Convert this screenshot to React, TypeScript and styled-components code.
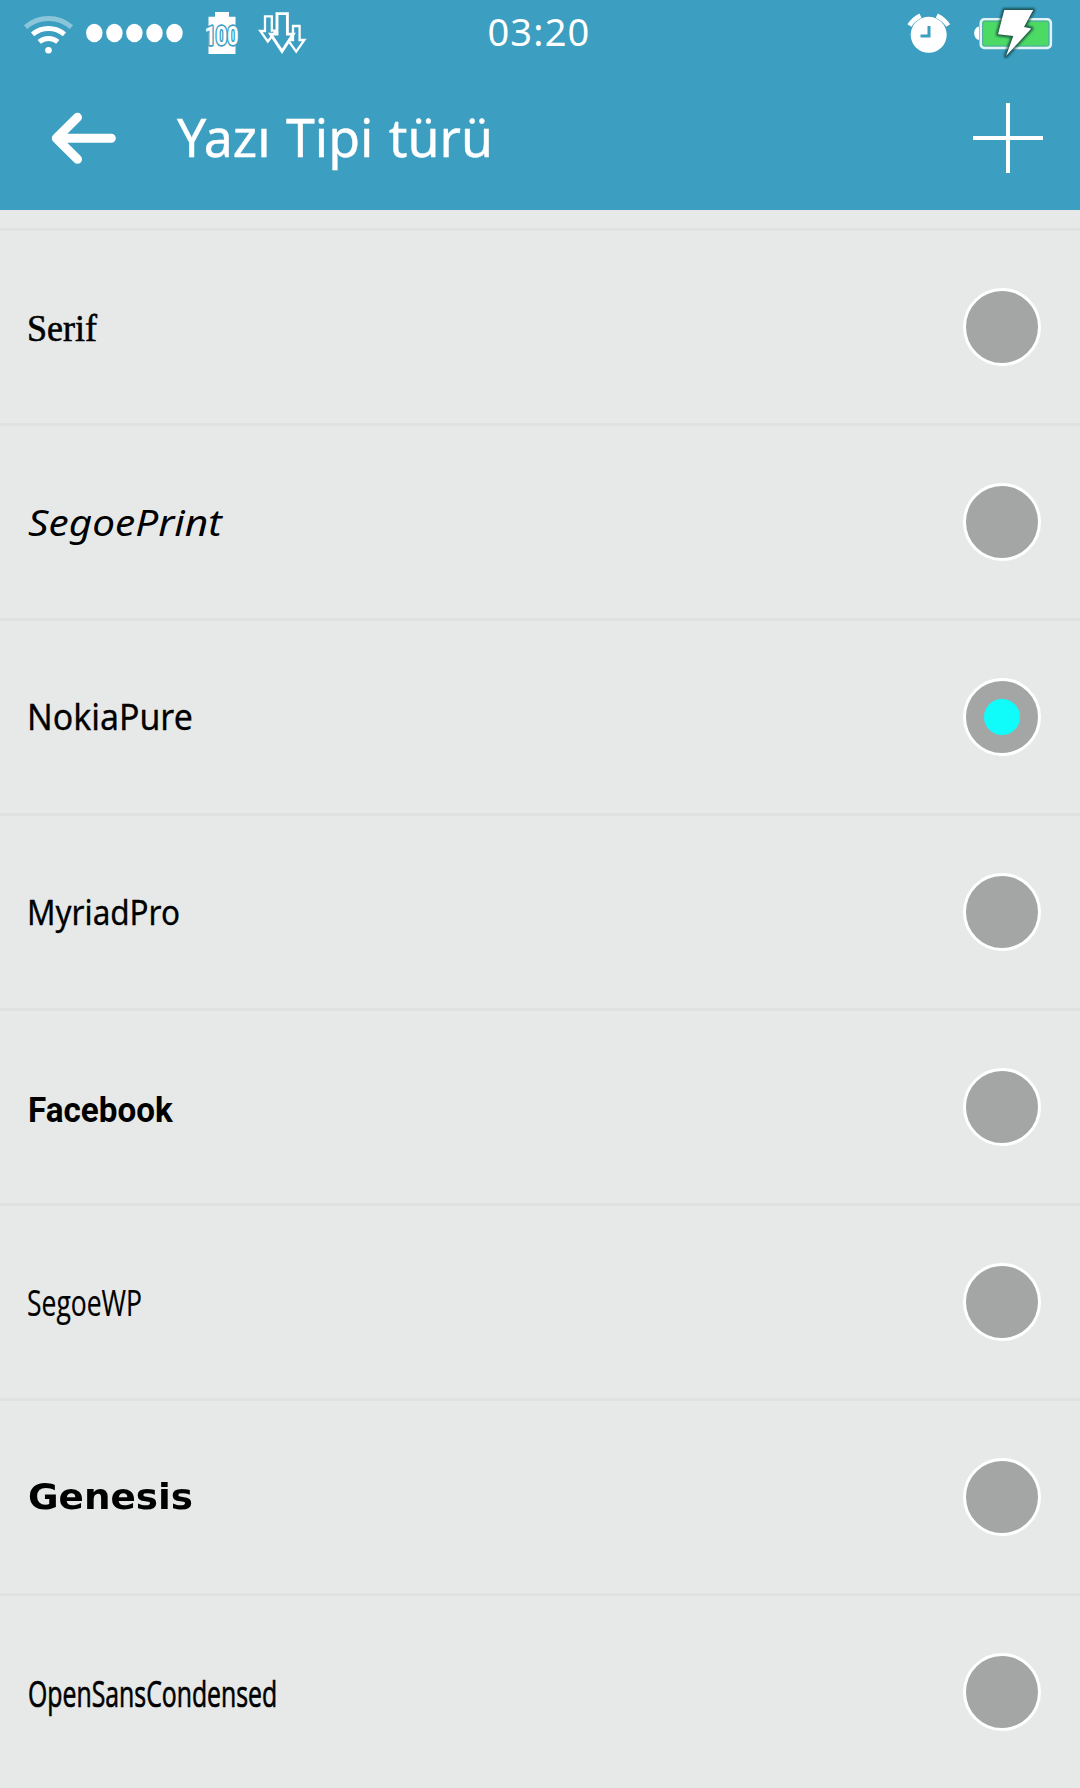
import React, { useState } from "react";
import styled, { createGlobalStyle } from "styled-components";

const BLUE = "#3c9ec0";

const GlobalStyle = createGlobalStyle`
  * { box-sizing: border-box; }
  html, body { margin: 0; background: #e6e9e8; }
`;

const Screen = styled.main`
  width: 1080px;
  height: 1788px;
  overflow: hidden;
  display: flex;
  flex-direction: column;
  background: #e6e9e8;
  font-family: "Noto Sans", "Open Sans", sans-serif;
`;

const StatusBar = styled.div`
  display: grid;
  grid-template-columns: 1fr auto 1fr;
  align-items: center;
  height: 66px;
  flex: none;
  background: ${BLUE};
`;

const StatusGroup = styled.div<{ $end?: boolean }>`
  display: flex;
  align-items: center;
  height: 66px;
  justify-content: ${(p) => (p.$end ? "flex-end" : "flex-start")};

  svg { display: block; }
`;

const Clock = styled.time`
  color: #fff;
  font-size: 38px;
  line-height: 66px;
  letter-spacing: 1.2px;
  transform: translate(-1px, -2px);
`;

const TitleBar = styled.header`
  display: flex;
  align-items: center;
  height: 144px;
  flex: none;
  padding: 0 36px 0 50px;
  background: ${BLUE};
`;

const IconButton = styled.button`
  display: flex;
  padding: 0;
  border: 0;
  background: none;
  cursor: pointer;
`;

const Title = styled.h1`
  flex: 1;
  margin: 0 0 0 59px;
  color: #fff;
  font-size: 53px;
  font-weight: 400;
  line-height: 73px;
  word-spacing: 2px;
  -webkit-text-stroke: 0.4px #fff;
  transform: translateY(-2px) scaleX(0.978);
  transform-origin: 0 50%;
`;

const FontList = styled.ul`
  margin: 0;
  padding: 18px 0 0;
  list-style: none;
`;

const FontRow = styled.li`
  display: flex;
  align-items: center;
  justify-content: space-between;
  height: 195px;
  padding: 0 39px 0 27px;
  border-top: 3px solid #dfe2e1;
  cursor: pointer;
`;

interface LabelProps {
  $family: string;
  $size: number;
  $weight?: number;
  $italic?: boolean;
  $stretch: number;
  $drop?: number;
  $inset?: number;
  $thicken?: number;
}

const FontLabel = styled.span<LabelProps>`
  margin-left: ${(p) => p.$inset ?? 0}px;
  color: #000;
  font-family: ${(p) => p.$family}, sans-serif;
  font-size: ${(p) => p.$size}px;
  font-weight: ${(p) => p.$weight ?? 400};
  font-style: ${(p) => (p.$italic ? "italic" : "normal")};
  white-space: nowrap;
  -webkit-text-stroke: ${(p) => p.$thicken ?? 0}px #000;
  transform: translateY(${(p) => p.$drop ?? 0}px) scaleX(${(p) => p.$stretch});
  transform-origin: 0 50%;
`;

const Radio = styled.span`
  display: grid;
  place-items: center;
  width: 78px;
  height: 78px;
  border: 3px solid #fff;
  border-radius: 50%;
  background: #a4a6a5;
`;

const RadioDot = styled.span`
  width: 36px;
  height: 36px;
  border-radius: 50%;
  background: #0ffcfa;
`;

interface FontOption extends LabelProps {
  name: string;
}

const fonts: FontOption[] = [
  { name: "Serif", $family: '"Liberation Serif"', $size: 38.5, $stretch: 0.935, $drop: 1, $thicken: 0.6 },
  { name: "SegoePrint", $family: '"Noto Sans"', $size: 37, $italic: true, $stretch: 1.095, $drop: -1, $inset: 1 },
  { name: "NokiaPure", $family: '"Noto Sans"', $size: 36, $stretch: 0.94, $drop: -1, $thicken: 0.3 },
  { name: "MyriadPro", $family: '"Noto Sans"', $size: 35, $stretch: 0.898, $drop: -1, $thicken: 0.3 },
  { name: "Facebook", $family: "Roboto", $size: 34.5, $weight: 700, $stretch: 0.963, $drop: 3, $inset: 0.5 },
  { name: "SegoeWP", $family: '"Open Sans"', $size: 36, $stretch: 0.736, $drop: -0.5, $thicken: 0.2 },
  { name: "Genesis", $family: '"DejaVu Sans"', $size: 35, $weight: 700, $stretch: 1.066, $inset: 0.5 },
  { name: "OpenSansCondensed", $family: '"Open Sans"', $size: 37, $weight: 500, $stretch: 0.671, $drop: -0.5, $thicken: 0.7, $inset: 0.5 },
];

const StatusIcons = () => (
  <svg width="320" height="66" viewBox="0 0 320 66" fill="none">
    <g stroke="#fff" strokeWidth="5">
      <path d="M25.6 27.2A34.5 34.5 0 0 1 71.4 27.2" opacity=".4" />
      <path d="M32.6 34.4A24.5 24.5 0 0 1 64.4 34.4" />
      <path d="M39.2 41.9A14.5 14.5 0 0 1 57.8 41.9" />
    </g>
    <circle cx="48.5" cy="50.3" r="3.3" fill="#fff" />
    {[94.3, 114.4, 134.4, 154.5, 174.5].map((x) => (
      <ellipse key={x} cx={x} cy="33" rx="8.2" ry="9.3" fill="#fff" />
    ))}
    <path d="M215 12h14v4.7h6.5V54h-27V16.7h6.5z" fill="#fff" />
    <text
      x="204.5"
      y="45"
      textLength="34"
      lengthAdjust="spacingAndGlyphs"
      fontFamily="Roboto, sans-serif"
      fontSize="25"
      fontWeight="700"
      fill="#fff"
      stroke={BLUE}
      strokeWidth="3.4"
      strokeLinejoin="round"
      paintOrder="stroke"
    >
      100
    </text>
    <g stroke="#fff" strokeWidth="2.3" fill={BLUE}>
      <path d="M265 16.4h6.8v14.3h4.5L267.8 41.5 260.3 31h4.7z" />
      <path d="M293 26h6.600V40h4.800L296.2 51.600 287.800 40h5.200z" />
      <path d="M277 13.600h10.400v20.500h5.800L282 51.400 270.600 34.100h6.400z" strokeWidth="2.900" />
    </g>
  </svg>
);

const AlarmIcon = () => (
  <svg width="60" height="66" viewBox="900 0 60 66" fill="none">
    <circle cx="928.7" cy="34.8" r="18" fill="#fff" />
    <path d="M929 26v10H920.5" stroke={BLUE} strokeWidth="3" />
    <g stroke="#fff" strokeWidth="4.6">
      <path d="M909.4 25.5Q913 19.5 920.5 15.6" />
      <path d="M936.8 15.6Q944.5 19.5 948.2 25.5" />
    </g>
  </svg>
);

const BOLT = "M1004.3 10H1033.2L1024 27 1031.3 28.5 1006 56 1013.3 36 998 34.200z";

const BatteryIcon = () => (
  <svg width="120" height="66" viewBox="960 0 120 66" strokeLinejoin="round">
    <defs>
      <filter id="bolt-shadow" x="-30%" y="-20%" width="160%" height="140%">
        <feGaussianBlur stdDeviation="1.1" />
      </filter>
    </defs>
    <path d="M979 26.5c-6.500 1-6.500 12.500 0 13.500z" fill="#fff" />
    <rect x="980.8" y="19.3" width="70" height="28.6" rx="3.5" fill="#4cd964" stroke="#e4f2f7" strokeWidth="2.6" />
    <rect x="982.700" y="21.200" width="66.200" height="24.800" rx="2.500" fill="none" stroke="#4aa9b0" strokeWidth="1" />
    <path d={BOLT} fill="none" stroke="#123f3c" strokeOpacity=".8" strokeWidth="4" filter="url(#bolt-shadow)" />
    <path d={BOLT} fill="#fff" />
  </svg>
);

export default function App() {
  const [selected, setSelected] = useState("NokiaPure");
  return (
    <>
      <GlobalStyle />
      <Screen>
        <StatusBar>
          <StatusGroup>
            <StatusIcons />
          </StatusGroup>
          <Clock>03:20</Clock>
          <StatusGroup $end>
            <AlarmIcon />
            <BatteryIcon />
          </StatusGroup>
        </StatusBar>
        <TitleBar>
          <IconButton aria-label="Geri">
            <svg width="68" height="56" viewBox="0 0 68 56" fill="none" stroke="#fff" strokeWidth="9" strokeLinecap="round" strokeLinejoin="round">
              <path d="M27.5 7.3 6.3 28.300 27.5 49.300M8 28.300H61.300" />
            </svg>
          </IconButton>
          <Title>Yazı Tipi türü</Title>
          <IconButton aria-label="Ekle">
            <svg width="72" height="72" viewBox="0 0 72 72" stroke="#fff" strokeWidth="4">
              <path d="M36 1v70M1 36h70" />
            </svg>
          </IconButton>
        </TitleBar>
        <FontList>
          {fonts.map(({ name, ...look }) => (
            <FontRow key={name} onClick={() => setSelected(name)}>
              <FontLabel {...look}>{name}</FontLabel>
              <Radio>{selected === name && <RadioDot />}</Radio>
            </FontRow>
          ))}
        </FontList>
      </Screen>
    </>
  );
}
